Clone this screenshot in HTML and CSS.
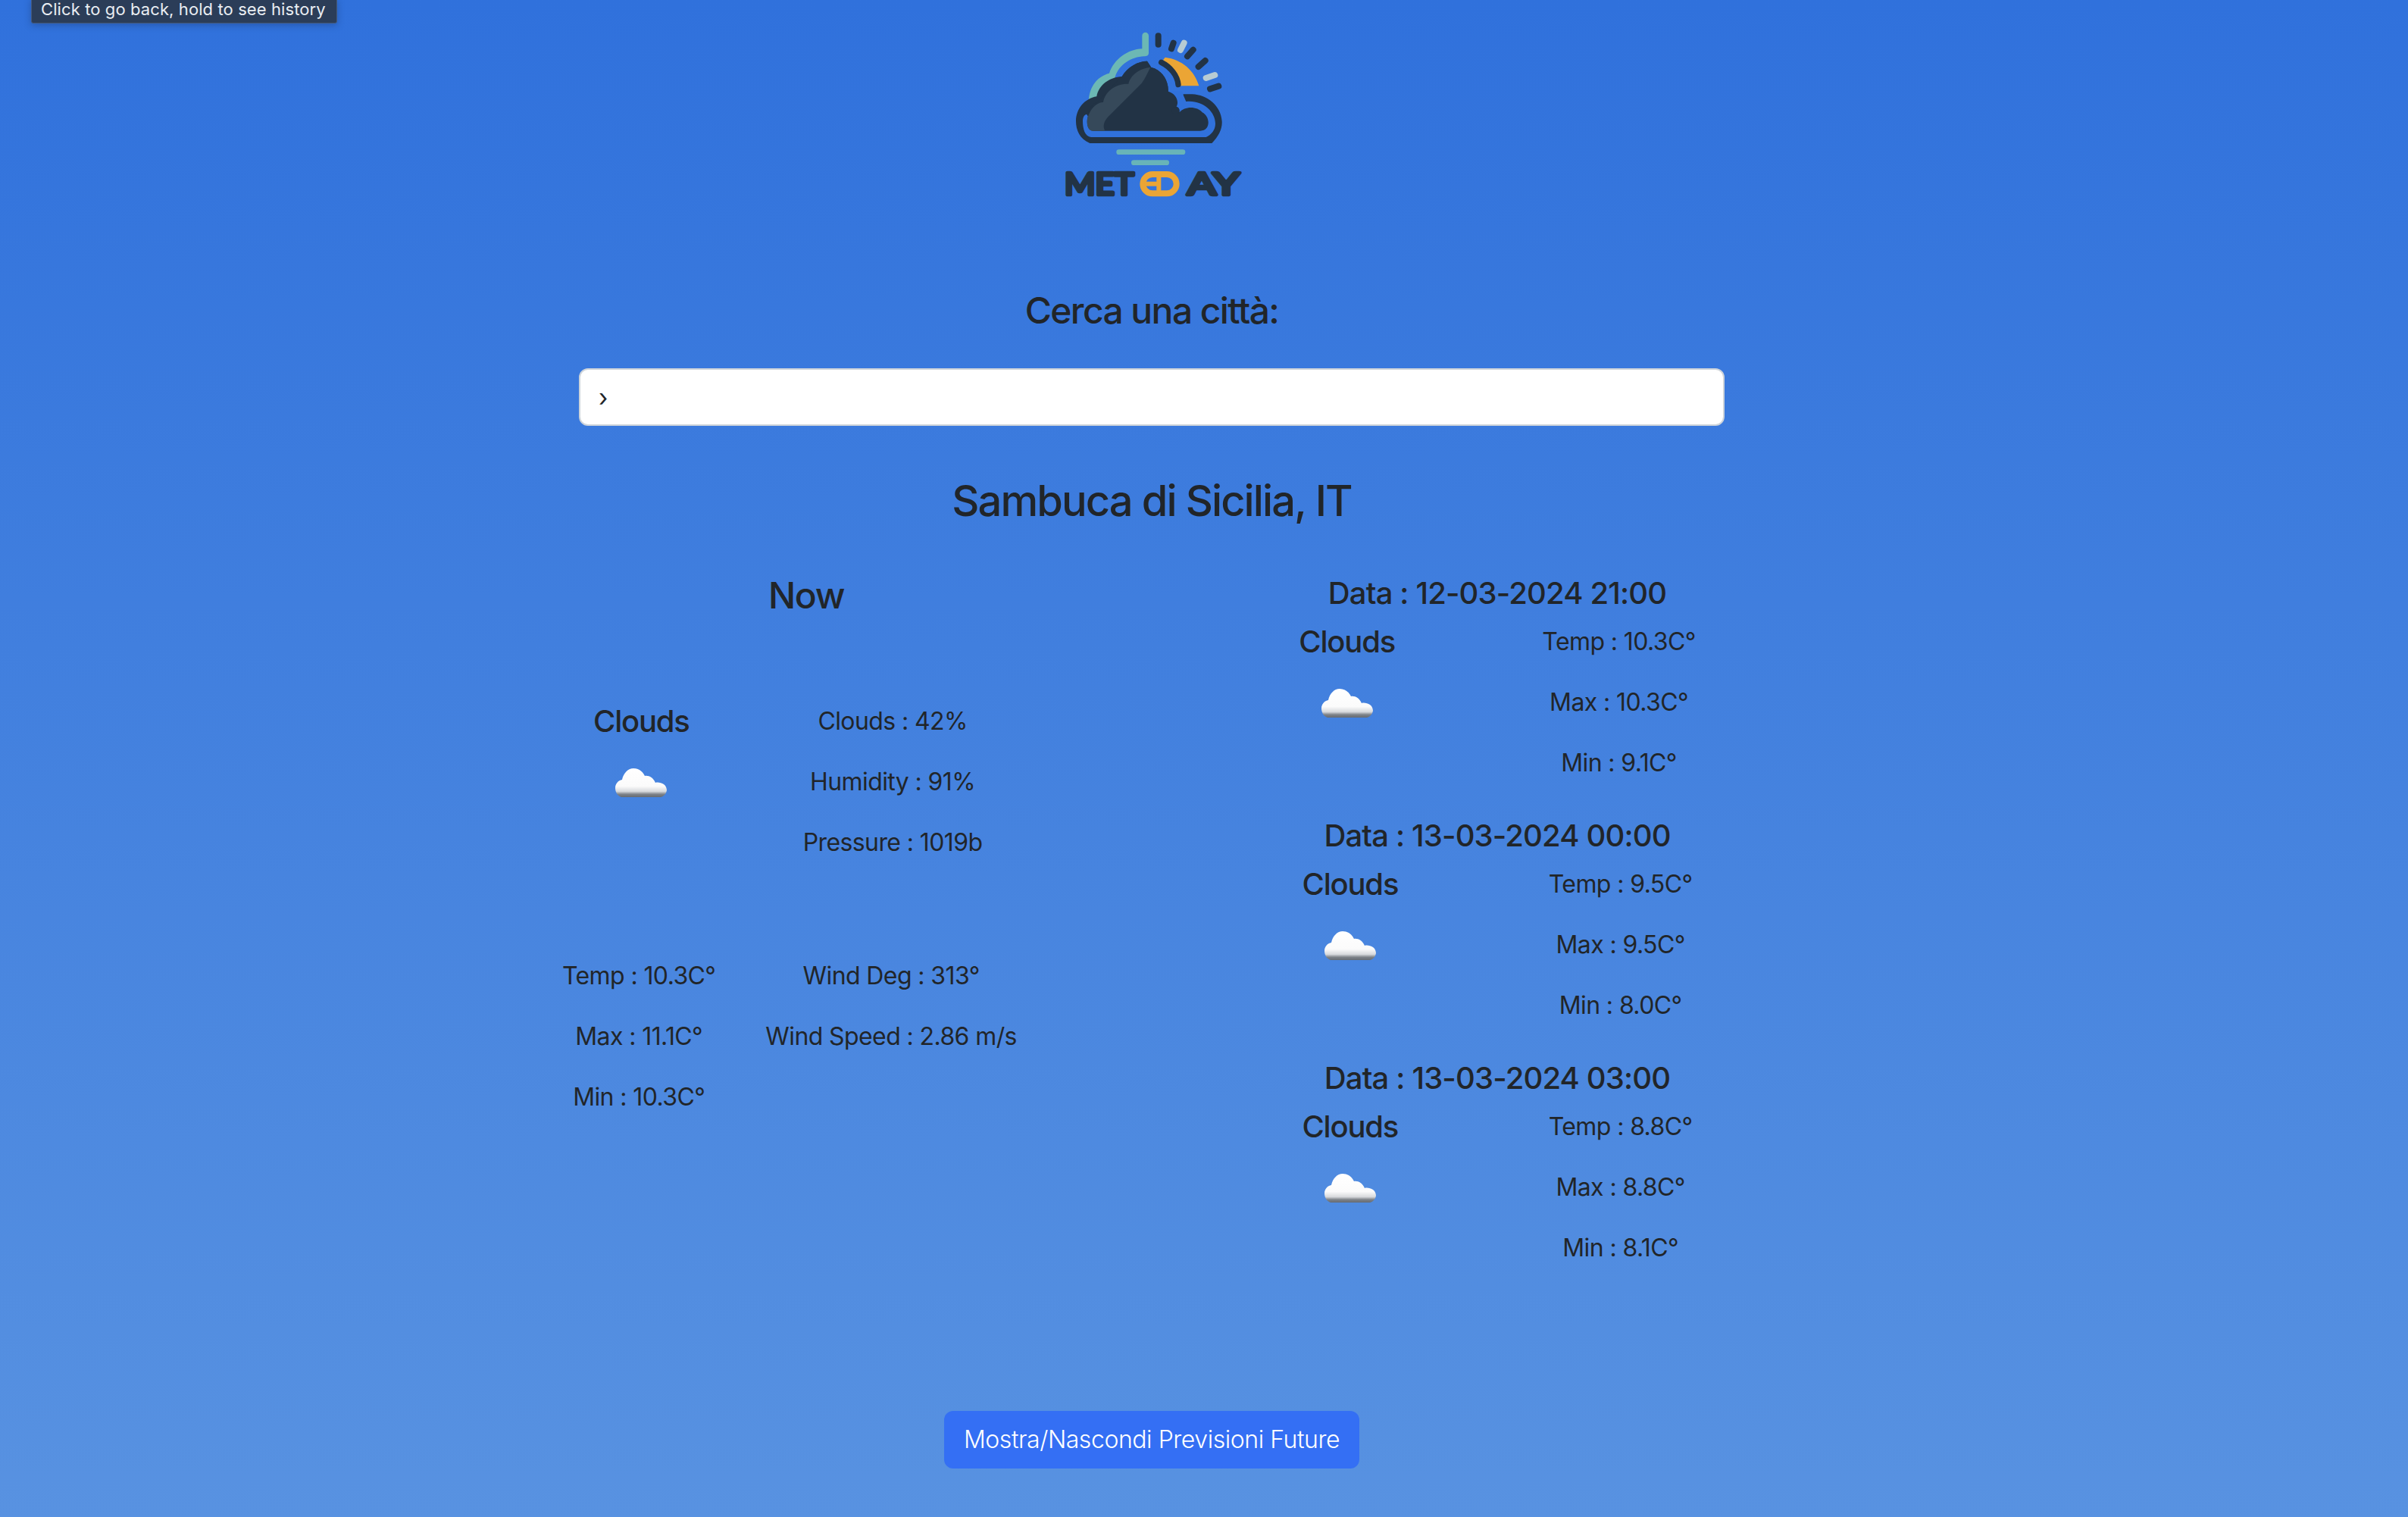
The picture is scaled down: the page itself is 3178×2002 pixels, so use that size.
FILE: index.html
```html
<!DOCTYPE html>
<html lang="it">
<head>
<meta charset="utf-8">
<title>Meteday</title>
<link rel="stylesheet" href="styles.css">
</head>
<body>
<main class="page">
  <header class="brand">
    <svg class="logo" viewBox="0 0 960 780" role="img" aria-label="Meteday">
      <path class="teal" d="M231 332C235 282 265 242 312 230C330 175 385 135 442 133L442 82C442 64 468 64 468 82L468 150C468 160 460 163 450 163C400 165 350 195 335 245L330 300L275 340Z"/>
      <path class="dark" d="M235 507C195 490 180 455 180 420C180 370 215 330 262 322C270 275 315 245 362 243C385 205 425 182 462 182L478 207C520 215 548 260 545 302C575 310 590 340 590 360L605 313L640 313C700 315 755 360 758 420C760 450 745 480 718 507Z"/>
      <path class="sky" d="M598 300L616 342C680 335 732 380 732 430C732 455 715 475 695 483L240 483C215 480 207 450 207 420C207 405 212 395 222 392L240 420L560 300Z"/>
      <path class="dark" d="M250 458C228 458 222 435 225 410C232 395 225 360 262 345L362 243C385 205 425 182 462 182L478 207C520 215 548 260 545 302C575 310 590 340 578 362C590 365 590 378 590 385C610 360 660 360 680 385C712 400 715 458 672 458Z"/>
      <circle class="dark" cx="575" cy="378" r="15"/>
      <path class="slate" d="M248 458C228 458 222 435 225 410C240 360 270 345 288 345C295 300 340 270 388 272C395 240 430 210 475 207C465 225 455 250 440 270L310 400C290 420 285 440 295 458Z"/>
      <path class="sun" d="M533 167C600 175 650 220 667 280L580 280C575 235 555 200 525 178Z"/>
      <path class="arc" d="M518 187C555 205 582 240 585 275"/>
      <g class="rays">
        <line x1="506" y1="82" x2="506" y2="116"/>
        <line x1="566" y1="110" x2="558" y2="133"/>
        <line class="pale" x1="608" y1="110" x2="594" y2="138"/>
        <line x1="644" y1="137" x2="621" y2="163"/>
        <line x1="692" y1="180" x2="665" y2="204"/>
        <line class="pale" x1="730" y1="237" x2="695" y2="249"/>
        <line x1="745" y1="281" x2="711" y2="292"/>
      </g>
      <line class="bar" x1="350" y1="542" x2="603" y2="542"/>
      <line class="bar" x1="409" y1="584" x2="539" y2="584"/>
      <text class="word" x="135" y="710" textLength="275" lengthAdjust="spacingAndGlyphs">MET</text>
      <rect class="pill" x="445" y="630" width="133" height="76" rx="38"/>
      <line class="ed" x1="508" y1="630" x2="508" y2="706"/>
      <line class="ed" x1="452" y1="668" x2="508" y2="668"/>
      <text class="word" x="622" y="710" textLength="205" lengthAdjust="spacingAndGlyphs">AY</text>
    </svg>
  </header>

  <h3 class="search-label">Cerca una città:</h3>
  <input class="search" type="text" value="›" aria-label="Cerca una città">

  <h2 class="city">Sambuca di Sicilia, IT</h2>

  <section class="forecast">
    <div class="now">
      <h3 class="now-title">Now</h3>
      <div class="now-row now-row-top">
        <div class="cell">
          <h5 class="cond">Clouds</h5>
          <svg class="cloud" viewBox="0 0 68 38"><use href="#cloud-shape"/></svg>
        </div>
        <div class="cell">
          <p>Clouds : 42%</p>
          <p>Humidity : 91%</p>
          <p>Pressure : 1019b</p>
        </div>
      </div>
      <div class="now-row now-row-bottom">
        <div class="cell">
          <p>Temp : 10.3C°</p>
          <p>Max : 11.1C°</p>
          <p>Min : 10.3C°</p>
        </div>
        <div class="cell">
          <p>Wind Deg : 313°</p>
          <p>Wind Speed : 2.86 m/s</p>
        </div>
      </div>
    </div>

    <div class="later">
      <article class="slot">
        <h4 class="slot-date">Data : 12-03-2024 21:00</h4>
        <div class="slot-row">
          <div class="cell">
            <h5 class="cond">Clouds</h5>
            <svg class="cloud" viewBox="0 0 68 38"><use href="#cloud-shape"/></svg>
          </div>
          <div class="cell">
            <p>Temp : 10.3C°</p>
            <p>Max : 10.3C°</p>
            <p>Min : 9.1C°</p>
          </div>
        </div>
      </article>
      <article class="slot">
        <h4 class="slot-date">Data : 13-03-2024 00:00</h4>
        <div class="slot-row">
          <div class="cell">
            <h5 class="cond">Clouds</h5>
            <svg class="cloud" viewBox="0 0 68 38"><use href="#cloud-shape"/></svg>
          </div>
          <div class="cell">
            <p>Temp : 9.5C°</p>
            <p>Max : 9.5C°</p>
            <p>Min : 8.0C°</p>
          </div>
        </div>
      </article>
      <article class="slot">
        <h4 class="slot-date">Data : 13-03-2024 03:00</h4>
        <div class="slot-row">
          <div class="cell">
            <h5 class="cond">Clouds</h5>
            <svg class="cloud" viewBox="0 0 68 38"><use href="#cloud-shape"/></svg>
          </div>
          <div class="cell">
            <p>Temp : 8.8C°</p>
            <p>Max : 8.8C°</p>
            <p>Min : 8.1C°</p>
          </div>
        </div>
      </article>
    </div>
  </section>

  <div class="actions">
    <button class="toggle" type="button">Mostra/Nascondi Previsioni Future</button>
  </div>
</main>
<div class="tooltip">Click to go back, hold to see history</div>
<svg width="0" height="0" class="defs" aria-hidden="true">
  <defs>
    <linearGradient id="cloudShade" x1="0" y1="0" x2="0" y2="1">
      <stop offset="0" stop-color="#ffffff"/>
      <stop offset=".62" stop-color="#fbfbfb"/>
      <stop offset=".8" stop-color="#d8dadd"/>
      <stop offset=".9" stop-color="#7d8288"/>
      <stop offset="1" stop-color="#666b72"/>
    </linearGradient>
    <path id="cloud-shape" fill="url(#cloudShade)" d="M8 38C2 36 0 30 0 26C0 20 4 16 9 15C11 6 17 0 24 0C31 0 36 4 39 10C44 9 50 12 53 19C56 18 61 19 64 21C67 23 68 27 68 29C67 34 64 37 60 38Z"/>
  </defs>
</svg>
</body>
</html>
```

FILE: styles.css
```css
* { box-sizing: border-box; }

html, body { margin: 0; height: 100%; }

body {
  min-height: 2002px;
  overflow: hidden;
  background: linear-gradient(180deg, #3071dc 0%, #5892e1 100%);
  color: #212529;
  font-family: Inter, "Liberation Sans", sans-serif;
  font-size: 32px;
  line-height: 48px;
  letter-spacing: -0.6px;
}

.defs { position: absolute; }

.tooltip {
  position: absolute;
  left: 41px;
  top: -2px;
  width: 404px;
  height: 33px;
  padding-left: 12px;
  background: #2b3d58;
  border: 1px solid #44597a;
  border-radius: 0 0 3px 3px;
  box-shadow: 0 2px 10px rgba(20, 40, 80, .35);
  color: #e9edf2;
  font-size: 22px;
  line-height: 27px;
  letter-spacing: 0.1px;
  white-space: nowrap;
}

.page {
  width: 3040px;
  display: flex;
  flex-direction: column;
  align-items: center;
  padding-top: 20px;
}

.brand { height: 260px; }

.logo { display: block; width: 320px; height: 260px; }
.logo .teal { fill: #6cb8b4; }
.logo .dark { fill: #223345; }
.logo .sky { fill: #3071dc; }
.logo .slate { fill: #36495a; }
.logo .sun { fill: #eba535; }
.logo .arc { fill: none; stroke: #223345; stroke-width: 22; stroke-linecap: round; }
.logo .rays line { stroke: #223345; stroke-width: 24; stroke-linecap: round; }
.logo .rays .pale { stroke: #b7cbd3; }
.logo .bar { stroke: #68b4b8; stroke-width: 20; stroke-linecap: round; }
.logo .word {
  fill: #223345;
  stroke: #223345;
  stroke-width: 14;
  stroke-linejoin: round;
  font-family: Lato, sans-serif;
  font-weight: 400;
  font-size: 122px;
  letter-spacing: 0;
}
.logo .pill { fill: none; stroke: #eba535; stroke-width: 24; }
.logo .ed { stroke: #eba535; stroke-width: 18; }

h2, h3, h4, h5 { margin: 0; font-weight: 450; }
p { margin: 0; font-weight: 400; }

.search-label {
  margin-top: 101px;
  font-size: 48px;
  line-height: 58px;
  letter-spacing: -1.6px;
}

.search {
  display: block;
  width: 1512px;
  height: 76px;
  margin-top: 47px;
  padding: 0 24px;
  background: #fff;
  border: 2px solid #ced4da;
  border-radius: 12px;
  color: #212529;
  font: inherit;
  letter-spacing: 0;
}

.city {
  margin-top: 65px;
  font-size: 56px;
  line-height: 68px;
  letter-spacing: -1.9px;
}

.forecast {
  align-self: stretch;
  margin: 59px 608px 0;
  display: grid;
  grid-template-columns: 912px 912px;
}

.now-title {
  margin-top: 3px;
  font-size: 48px;
  line-height: 58px;
  letter-spacing: -1.4px;
  text-align: center;
}

.now-row { display: flex; }
.now-row-top { margin-top: 113px; padding-left: 175px; gap: 150px; }
.now-row-bottom { margin-top: 96px; padding-left: 134px; gap: 66px; }

.cell { display: flex; flex-direction: column; align-items: center; text-align: center; }
.cell p { margin-bottom: 32px; }

.cond {
  font-size: 40px;
  line-height: 48px;
  letter-spacing: -1.2px;
}

.cloud {
  display: block;
  width: 68px;
  height: 38px;
  margin-top: 38px;
}

.slot { height: 320px; }

.slot-date {
  font-size: 40px;
  line-height: 58px;
  letter-spacing: -0.85px;
  text-align: center;
}

.slot-row {
  margin-top: 11px;
  display: flex;
  justify-content: space-evenly;
}

.actions { margin-top: 148px; }

.toggle {
  display: block;
  width: 548px;
  height: 76px;
  background: #346ff4;
  border: 0;
  border-radius: 12px;
  color: #fff;
  font: inherit;
  font-weight: 300;
  letter-spacing: -0.45px;
}
```
